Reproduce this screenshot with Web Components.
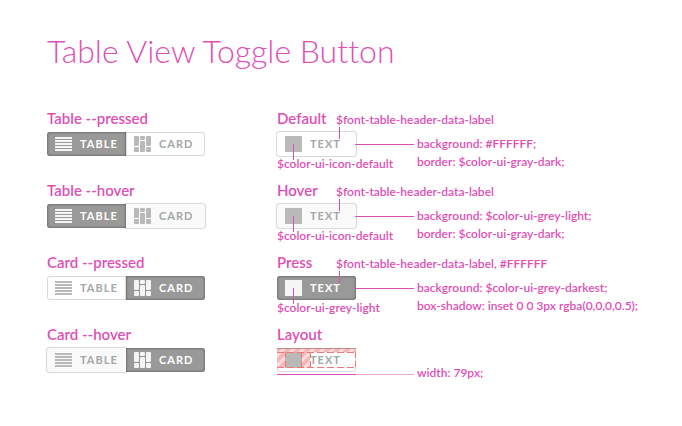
<!DOCTYPE html>
<html lang="en">
<head>
<meta charset="utf-8">
<meta name="viewport" content="width=device-width, initial-scale=1">
<title>Table View Toggle Button</title>
<style>
  :root {
    --spec: #de4fb5;
    --line: #d9d9d9;
    --icon: #b9b9b9;
    --label: #a3a8a8;
    --pressed: #999999;
    --light: #f5f5f5;
  }
  body {
    margin: 0;
    background: #ffffff;
    color: var(--spec);
    font: 600 12px/16px Lato, "Liberation Sans", sans-serif;
    font-variant-ligatures: none;
  }
</style>
</head>
<body>
<spec-page heading="Table View Toggle Button">
  <state-demo slot="states" label="Table --pressed">
    <toggle-group>
      <toggle-button icon="table" state="pressed" edge="start">TABLE</toggle-button>
      <toggle-button icon="card" edge="end">CARD</toggle-button>
    </toggle-group>
  </state-demo>
  <state-demo slot="states" label="Table --hover">
    <toggle-group>
      <toggle-button icon="table" state="pressed" edge="start">TABLE</toggle-button>
      <toggle-button icon="card" state="hover" edge="end">CARD</toggle-button>
    </toggle-group>
  </state-demo>
  <state-demo slot="states" label="Card --pressed">
    <toggle-group>
      <toggle-button icon="table" edge="start">TABLE</toggle-button>
      <toggle-button icon="card" state="pressed" edge="end">CARD</toggle-button>
    </toggle-group>
  </state-demo>
  <state-demo slot="states" label="Card --hover">
    <toggle-group>
      <toggle-button icon="table" state="hover" edge="start">TABLE</toggle-button>
      <toggle-button icon="card" state="pressed" edge="end">CARD</toggle-button>
    </toggle-group>
  </state-demo>

  <spec-item slot="specs" label="Default" font="$font-table-header-data-label" color="$color-ui-icon-default">
    <toggle-button icon="square" state="outlined">TEXT</toggle-button>
    <div slot="notes">background: #FFFFFF;</div>
    <div slot="notes">border: $color-ui-gray-dark;</div>
  </spec-item>
  <spec-item slot="specs" label="Hover" font="$font-table-header-data-label" color="$color-ui-icon-default">
    <toggle-button icon="square" state="hover">TEXT</toggle-button>
    <div slot="notes">background: $color-ui-grey-light;</div>
    <div slot="notes">border: $color-ui-gray-dark;</div>
  </spec-item>
  <spec-item slot="specs" label="Press" font="$font-table-header-data-label, #FFFFFF" color="$color-ui-grey-light">
    <toggle-button icon="square" state="pressed">TEXT</toggle-button>
    <div slot="notes">background: $color-ui-grey-darkest;</div>
    <div slot="notes">box-shadow: inset 0 0 3px rgba(0,0,0,0.5);</div>
  </spec-item>
  <spec-item slot="specs" label="Layout" measure>
    <toggle-button icon="square" guides>TEXT</toggle-button>
    <div slot="notes">width: 79px;</div>
  </spec-item>
</spec-page>

<script>
const define = (name, render) => customElements.define(name, class extends HTMLElement {
  connectedCallback() {
    if (this.shadowRoot) return;
    const template = document.createElement('template');
    template.innerHTML = render(this);
    this.attachShadow({ mode: 'open' }).append(template.content.cloneNode(true));
  }
});

define('spec-page', el => `
  <style>
    :host { display: block; padding: 31px 16px 32px 47px; }
    h1 { margin: 0 0 38px; font-size: 32px; line-height: 40px; font-weight: 300; }
    main { display: grid; grid-template-columns: 230px minmax(0, 1fr); }
    section { display: grid; grid-auto-rows: minmax(72px, auto); align-content: start; }
  </style>
  <h1>${el.getAttribute('heading')}</h1>
  <main>
    <section><slot name="states"></slot></section>
    <section><slot name="specs"></slot></section>
  </main>`);

define('state-demo', el => `
  <style>
    :host { display: block; }
    h2 { margin: 0 0 5px; font-size: 15px; line-height: 18px; font-weight: 600; }
  </style>
  <h2>${el.getAttribute('label')}</h2>
  <slot></slot>`);

define('toggle-group', () => `
  <style>:host { display: flex; }</style>
  <slot></slot>`);

define('toggle-icon', el => {
  const shapes = {
    table: '<path d="M0 1h17v2H0zM0 4h17v2H0zM0 7h17v2H0zM0 10h17v2H0zM0 13h17v2H0z"/>',
    card: `<rect width="5" height="10" rx="1"/><rect y="11" width="5" height="5" rx="1"/>
      <rect x="6" width="5" height="4" rx="1"/><rect x="6" y="5" width="5" height="11" rx="1"/>
      <rect x="12" width="5" height="10" rx="1"/><rect x="12" y="11" width="5" height="5" rx="1"/>`,
    square: '<path d="M0 0h17v16H0z"/>'
  };
  return `
  <style>
    :host { display: block; }
    svg { display: block; fill: currentColor; }
  </style>
  <svg width="17" height="16" viewBox="0 0 17 16" aria-hidden="true">${shapes[el.getAttribute('name')]}</svg>`;
});

define('toggle-button', el => `
  <style>
    :host { display: block; position: relative; width: 79px; }
    :host([state="hover"]) { z-index: 1; }
    button {
      display: flex; align-items: center; gap: 8px;
      box-sizing: border-box; width: 100%; height: 24px; margin: 0; padding: 0 0 0 8px;
      border: 0; border-radius: 3px; background: #ffffff;
      box-shadow: inset 0 0 0 1px var(--line);
      color: var(--label); font: inherit; font-size: 11px; font-weight: 700; letter-spacing: 1px;
    }
    toggle-icon { color: var(--icon); }
    :host([edge="start"]) button { border-radius: 3px 0 0 3px; }
    :host([edge="end"]) button { border-radius: 0 3px 3px 0; }
    :host([state="outlined"]) button { box-shadow: 0 0 0 1px var(--line); }
    :host([state="hover"]) button {
      background: #fafafa;
      box-shadow: 0 0 1px 1px #d6d6d6;
    }
    :host([state="pressed"]) { z-index: 2; }
    :host([state="pressed"]) button {
      background: var(--pressed); color: #ffffff;
      box-shadow: inset 0 0 3px rgba(0, 0, 0, 0.5);
    }
    :host([state="pressed"]) toggle-icon { color: var(--light); }
    .guides { position: absolute; inset: 0; width: 100%; height: 24px; }
  </style>
  <button type="button" aria-pressed="${el.getAttribute('state') === 'pressed'}">
    <toggle-icon name="${el.getAttribute('icon')}"></toggle-icon><slot></slot>
  </button>
  ${el.hasAttribute('guides') ? `
  <svg class="guides" viewBox="0 0 79 24" aria-hidden="true">
    <defs>
      <pattern id="hatch" width="7" height="7" patternUnits="userSpaceOnUse" patternTransform="rotate(45)">
        <path d="M0 0h7v7H0z" fill="#fddede"/><path d="M0 0h4v7H0z" fill="#f9b4b4"/>
      </pattern>
    </defs>
    <path d="M0 0h79v4H0zM0 4h8v16H0zM25 4h8v16h-8z" fill="url(#hatch)"/>
    <path d="M0 .5h79" stroke="#b98a8a"/>
    <path d="M0 4.500h79M0 19.500h79" stroke="#f07878" stroke-dasharray="7 3" fill="none"/>
    <path d="M8.500 4v16M24.500 4v16M33.500 4v16M78.500 4v16" stroke="#f07878" stroke-dasharray="6 3" fill="none"/>
  </svg>` : ''}`);

define('spec-item', el => {
  const font = el.getAttribute('font');
  const color = el.getAttribute('color');
  return `
  <style>
    :host { display: block; }
    header { display: grid; grid-template-columns: 59px auto; align-items: baseline; height: 18px; margin-bottom: 5px; }
    h2 { margin: 0; font-size: 15px; line-height: 18px; font-weight: 600; }
    .body { display: grid; grid-template-columns: 140px minmax(0, 1fr); }
    .sample { position: relative; white-space: nowrap; }
    .notes { padding-top: 3px; line-height: 18px; }
    :host([measure]) .notes { padding-top: 16px; }
    .lead { position: absolute; z-index: 3; background: var(--spec); }
    .to-note { left: 78px; top: 12px; width: 59px; height: 1px; }
    .to-font { left: 62px; top: -5px; width: 1px; height: 12px; }
    .to-color { left: 16px; top: 12px; width: 1px; height: 16px; }
    .width { left: 0; top: 26px; width: 79px; height: 1px; }
    .width-note { left: 79px; top: 26px; width: 58px; height: 1px; opacity: 0.5; }
  </style>
  <header><h2>${el.getAttribute('label')}</h2>${font ? `<span>${font}</span>` : ''}</header>
  <div class="body">
    <div class="sample">
      <slot></slot>
      ${color ? `<div>${color}</div>
      <i class="lead to-note"></i><i class="lead to-font"></i><i class="lead to-color"></i>`
      : '<i class="lead width"></i><i class="lead width-note"></i>'}
    </div>
    <div class="notes"><slot name="notes"></slot></div>
  </div>`;
});
</script>
</body>
</html>
